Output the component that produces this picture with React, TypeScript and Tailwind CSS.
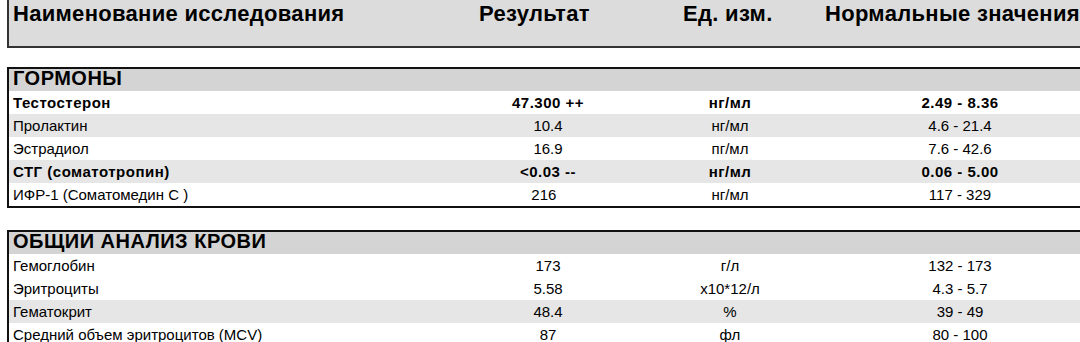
const font = { fontFamily: '"Liberation Sans", Arial, sans-serif' };

type Row = { name: string; result: string; unit: string; norm: string; bold?: boolean; shade?: boolean };

const hormones: Row[] = [
  { name: "Тестостерон", result: "47.300 ++", unit: "нг/мл", norm: "2.49 - 8.36", bold: true },
  { name: "Пролактин", result: "10.4", unit: "нг/мл", norm: "4.6 - 21.4", shade: true },
  { name: "Эстрадиол", result: "16.9", unit: "пг/мл", norm: "7.6 - 42.6" },
  { name: "СТГ (соматотропин)", result: "<0.03 --", unit: "нг/мл", norm: "0.06 - 5.00", bold: true, shade: true },
  { name: "ИФР-1 (Соматомедин С )", result: "216  ", unit: "нг/мл", norm: "117 - 329" },
];

const blood: Row[] = [
  { name: "Гемоглобин", result: "173", unit: "г/л", norm: "132 - 173" },
  { name: "Эритроциты", result: "5.58", unit: "x10*12/л", norm: "4.3 - 5.7" },
  { name: "Гематокрит", result: "48.4", unit: "%", norm: "39 - 49", shade: true },
  { name: "Средний объем эритроцитов (MCV)", result: "87", unit: "фл", norm: "80 - 100" },
];

function Section({ title, rows }: { title: string; rows: Row[] }) {
  return (
    <div className="ml-[7px] w-[1090px] border-2 border-r-0 border-[#111] text-black">
      <div className="h-[22px] bg-[#d4d4d4] pl-[4px] text-[20px] font-bold leading-[18px] tracking-[0.5px]">
        {title}
      </div>
      {rows.map((r) => (
        <div
          key={r.name}
          className={`grid h-[23px] grid-cols-[459px_160px_204px_256px] text-[15px] leading-[23px] ${
            r.shade ? "bg-[#e6e6e6]" : "bg-white"
          } ${r.bold ? "font-bold tracking-[0.5px]" : ""}`}
        >
          <div className="pl-[4px]">{r.name}</div>
          <div className="whitespace-pre text-center">{r.result}</div>
          <div className="text-center">{r.unit}</div>
          <div className="text-center">{r.norm}</div>
        </div>
      ))}
    </div>
  );
}

export default function App() {
  return (
    <div className="h-[342px] w-[1080px] overflow-hidden bg-white" style={font}>
      <div className="ml-[7px] grid h-[48px] w-[1090px] grid-cols-[466px_204px_142px_1fr] border-b-2 border-l-2 border-[#333] bg-[#dcdcdc] pl-[4px] text-[22px] font-bold leading-[28px] tracking-[0.3px] text-black">
        <div>Наименование исследования</div>
        <div>Результат</div>
        <div>Ед. изм.</div>
        <div className="whitespace-nowrap">Нормальные значения</div>
      </div>
      <div className="h-[19px]" />
      <Section title="ГОРМОНЫ" rows={hormones} />
      <div className="h-[22px]" />
      <Section title="ОБЩИИ АНАЛИЗ КРОВИ" rows={blood} />
    </div>
  );
}
